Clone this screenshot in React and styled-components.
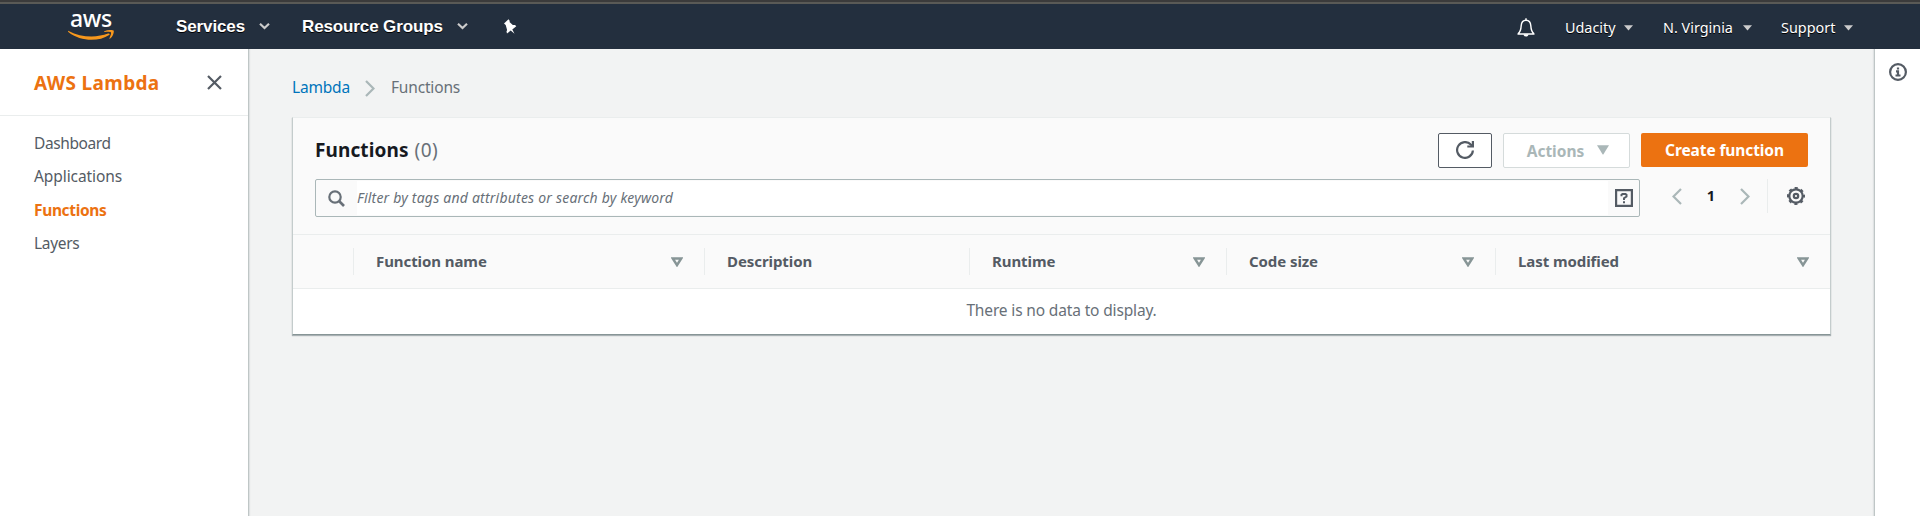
import React from "react";
import styled, { createGlobalStyle } from "styled-components";

const Global = createGlobalStyle`
  * { box-sizing: border-box; }
  body { margin: 0; background: #f2f3f3; font-family: "Noto Sans", "Open Sans", sans-serif; overflow: hidden; }
`;

const Page = styled.div`
  height: 516px;
  display: flex;
  flex-direction: column;
`;

const TopBar = styled.header`
  flex: none;
  height: 49px;
  padding-top: 4px;
  background: linear-gradient(#3b3b3b 2px, #5a5a56 2px, #5a5a56 4px, #232f3e 4px);
  display: flex;
  align-items: stretch;
`;

const Logo = styled.div`
  width: 47px;
  margin-left: 68px;
  padding-top: 3px;
  display: flex;
  flex-direction: column;
  align-items: flex-start;
  color: #fff;
`;
const LogoWord = styled.span`
  font-size: 23px;
  line-height: 22px;
  height: 23px;
  margin-left: 2px;
  font-weight: 500;
  letter-spacing: -0.3px;
`;

const MenuItem = styled.div`
  display: flex;
  align-items: center;
  white-space: nowrap;
  margin-left: ${(p) => p.$left}px;
  padding-top: ${(p) => p.$top || 0}px;
  height: 45px;
  gap: ${(p) => p.$gap}px;
  color: #fff;
  font-family: "Liberation Sans", Arial, sans-serif;
  font-size: 17px;
  font-weight: 700;
  text-shadow: 0 1px 0 #000;
`;
const AccountItem = styled(MenuItem)`
  font-family: "Noto Sans", sans-serif;
  font-size: 14.4px;
  font-weight: 400;
`;
const Spacer = styled.div`
  flex: 1;
`;
const Label = styled.span`
  display: inline-block;
  width: ${(p) => (p.$w ? p.$w + "px" : "auto")};
  letter-spacing: ${(p) => p.$ls || 0}px;
  white-space: nowrap;
`;

const Body = styled.div`
  flex: 1;
  display: flex;
  min-height: 0;
`;
const Sidebar = styled.nav`
  width: 249px;
  flex: none;
  background: #fff;
  border-right: 1px solid #bfc6c6;
  box-shadow: 1px 0 1px rgba(0, 28, 36, 0.08);
`;
const SideHeader = styled.div`
  height: 67px;
  border-bottom: 1px solid #eaeded;
  display: flex;
  align-items: center;
  justify-content: space-between;
  padding: 1px 26px 0 34px;
  color: #ec7211;
  font-size: 19px;
  font-weight: 700;
`;
const SideList = styled.div`
  padding: 11px 0 0 34px;
  display: flex;
  flex-direction: column;
`;
const SideLink = styled.a`
  height: 33.3px;
  line-height: 33px;
  font-size: 15.5px;
  font-weight: ${(p) => (p.$active ? 700 : 400)};
  color: ${(p) => (p.$active ? "#ec7211" : "#545b64")};
`;

const Main = styled.main`
  flex: 1;
  padding: 20px 43px 0 43px;
`;
const Crumbs = styled.div`
  height: 36px;
  display: flex;
  align-items: center;
  font-size: 15.5px;
  color: #687078;
`;
const Link = styled.a`
  color: #0073bb;
`;
const CrumbArrow = styled.span`
  display: flex;
  margin: 2px 16px 0 15px;
`;

const Panel = styled.section`
  margin-top: 12px;
  height: 218px;
  background: #fff;
  border: 1px solid #c4cccc;
  border-top-color: #eaeded;
  border-bottom: 1px solid #879596;
  box-shadow: 0 1px 1px rgba(0, 28, 36, 0.3);
`;
const PanelHead = styled.div`
  height: 117px;
  background: #fafafa;
  border-bottom: 1px solid #eaeded;
  padding: 15px 22px 0 22px;
`;
const TitleRow = styled.div`
  display: flex;
  height: 35px;
  align-items: center;
`;
const Title = styled.h2`
  margin: 0;
  font-size: 19px;
  line-height: 34px;
  padding-bottom: 1px;
  font-weight: 700;
  color: #16191f;
  display: flex;
  gap: 6px;
`;
const Count = styled.span`
  font-weight: 400;
  color: #687078;
  letter-spacing: 0.4px;
`;
const Button = styled.button`
  font: inherit;
  font-size: 15.5px;
  font-weight: 700;
  line-height: 30px;
  padding: 0 0 ${(p) => (p.$primary ? 1 : 0)}px ${(p) => p.$shift || 0}px;
  height: ${(p) => (p.$primary ? 34 : 35)}px;
  align-self: flex-start;
  width: ${(p) => p.$w}px;
  margin-left: 11px;
  border-radius: 2px;
  display: flex;
  align-items: center;
  justify-content: center;
  gap: 13px;
  background: ${(p) => (p.$primary ? "#ec7211" : "#fff")};
  color: ${(p) => (p.$primary ? "#fff" : "#aab7b8")};
  border: ${(p) => (p.$primary ? "0" : "1px solid " + (p.$line || "#d5dbdb"))};

  & > svg {
    margin-bottom: 1px;
  }
`;
const FilterRow = styled.div`
  display: flex;
  align-items: center;
  margin-top: 11px;
  height: 38px;
`;
const Search = styled.div`
  width: 1325px;
  height: 38px;
  border: 1px solid #aab7b8;
  border-radius: 2px;
  display: flex;
  align-items: stretch;
  padding: 1px 0;
`;
const SearchEdge = styled.span`
  width: ${(p) => p.$w}px;
  display: flex;
  align-items: center;
  justify-content: center;
`;
const SearchField = styled.span`
  flex: 1;
  background: #fff;
  color: #687078;
  font-style: italic;
  font-size: 14px;
  line-height: 34px;
`;
const Pager = styled.div`
  flex: 1;
  height: 34px;
  margin-top: -4px;
  display: flex;
  align-items: center;
  padding-left: 32px;
`;
const PageNumber = styled.span`
  width: 58px;
  text-align: center;
  font-size: 14.5px;
  line-height: 20px;
  padding-bottom: 2px;
  font-weight: 700;
  color: #16191f;
`;
const Divider = styled.span`
  width: 1px;
  height: 34px;
  background: #eaeded;
  margin: 0 19px 0 17px;
`;

const HeadRow = styled.div`
  display: grid;
  grid-template-columns: 60px 351px 265px 257px 269px 1fr;
  height: 54px;
  align-items: center;
  background: #fafafa;
  border-bottom: 1px solid #eaeded;
`;
const HeadCell = styled.div`
  height: 27px;
  border-left: ${(p) => (p.$first ? "0" : "1px solid #eaeded")};
  padding: 0 21px 0 22px;
  display: flex;
  align-items: center;
  justify-content: space-between;
  font-size: 15px;
  line-height: 24px;
  font-weight: 700;
  color: #545b64;

  & > span {
    padding-bottom: 2px;
  }
`;
const Empty = styled.div`
  height: 43px;
  line-height: 42px;
  text-align: center;
  font-size: 15.5px;
  color: #687078;
`;
const HelpRail = styled.aside`
  width: 46px;
  flex: none;
  border-left: 1px solid #bfc6c6;
  box-shadow: -1px 0 1px rgba(0, 28, 36, 0.08);
  background: #fff;
  display: flex;
  justify-content: center;
  padding-top: 14px;
`;

const Smile = () => (
  <svg width="47" height="12" viewBox="0 0 44 12" preserveAspectRatio="none" fill="#f7981d">
    <path d="M.6.9C12 7.600 27 7.800 37.500 3.600c1.200-.5 2 .5 1 1.300C29 11.800 12 12 .3 2-.2 1.500.1.700.6.900z" />
    <path d="M34 1.200C37.500-.4 42-.2 42.700.5c.6.8-.2 5.500-3.200 8-.5.4-.9.100-.7-.3.7-1.800 2-5 1.400-5.800-.7-.9-4-.6-5.800-.4-.6.100-.800-.4-.4-.8z" />
  </svg>
);
const Chevron = () => (
  <svg width="11" height="7" viewBox="0 0 11 7">
    <path d="M1 .8l4.500 4.200L10 .8" fill="none" stroke="#ccc" strokeWidth="2.200" />
  </svg>
);
const Caret = () => (
  <svg width="9" height="6" viewBox="0 0 9 6">
    <path d="M0 .3h9L4.500 5.500z" fill="#ccc" />
  </svg>
);
const Pin = () => (
  <svg width="14" height="16" viewBox="0 0 14 16" fill="#fff">
    <path d="M1 4.500L5.500.3l1.300 1.600-.3 1.200 3.300 3 2.200-.2 1.300 1.400-4 3.200 2.200 4.300-3.800-3.200-3.700 3-.5-2.200.6-1.500L2.700 5.900z" />
  </svg>
);
const Bell = () => (
  <svg width="18" height="19" viewBox="0 0 18 19" fill="none" stroke="#fff" strokeWidth="1.400">
    <path d="M.5 16h17M1.200 15.600c2.500-2 2.800-4.500 3-8C4.400 4.300 6 2.200 9 2.200s4.600 2.100 4.800 5.400c.2 3.500.5 6 3 8" />
    <path d="M9 .3v2" />
    <path d="M6.500 16.200h5c-.2 1.500-1.100 2.400-2.500 2.400s-2.300-.9-2.500-2.400z" fill="#fff" stroke="none" />
  </svg>
);
const Close = () => (
  <svg width="15" height="15" viewBox="0 0 15 15">
    <path d="M1 1l13 13M14 1L1 14" stroke="#545b64" strokeWidth="2.200" />
  </svg>
);
const Arrow = ({ left }) => (
  <svg width="10" height="17" viewBox="0 0 10 17">
    <path d={left ? "M9 1L1.500 8.500 9 16" : "M1 1l7.500 7.500L1 16"} fill="none" stroke="#aab7b8" strokeWidth="2.200" />
  </svg>
);
const Refresh = () => (
  <svg width="18" height="18" viewBox="0 0 18 18" fill="none" stroke="#545b64" strokeWidth="2.200">
    <path d="M16.900 9.500A7.900 7.900 0 1 1 14.800 3.600L16.300 5.100" />
    <path d="M16.900 0v5.500h-5.600" />
  </svg>
);
const Down = () => (
  <svg width="12" height="10" viewBox="0 0 12 10">
    <path d="M0 .3h12L6.300 9.500h-.6z" fill="#aab7b8" />
  </svg>
);
const Magnifier = () => (
  <svg width="17" height="17" viewBox="0 0 17 17" fill="none" stroke="#687078">
    <circle cx="7" cy="7" r="5.700" strokeWidth="2.200" />
    <path d="M11 11l5 5" strokeWidth="2.600" />
  </svg>
);
const Help = () => (
  <svg width="18" height="18" viewBox="0 0 18 18" fill="none" stroke="#545b64" strokeWidth="2">
    <path d="M1 1h16v16H1z" strokeWidth="2.400" />
    <path d="M6.500 7.300V5.700L7.500 4.900h3l1 .8v1.800L9 9.300v1.700M9 12.200v2" />
  </svg>
);
const Gear = () => (
  <svg width="18" height="18" viewBox="0 0 18 18" fill="none" stroke="#545b64">
    <circle cx="9" cy="9" r="6.700" strokeWidth="2.200" />
    <circle cx="9" cy="9" r="8" strokeWidth="2" strokeDasharray="3.140 3.140" strokeDashoffset="1.570" />
    <circle cx="9" cy="9" r="2.200" strokeWidth="2.200" />
  </svg>
);
const Sort = () => (
  <svg width="12" height="10" viewBox="0 0 12 10">
    <path d="M1.800 1.500h8.400L6 8.100z" fill="none" stroke="#879596" strokeWidth="2.500" />
  </svg>
);
const Info = () => (
  <svg width="18" height="18" viewBox="0 0 18 18" fill="none" stroke="#545b64" strokeWidth="2.200">
    <circle cx="9" cy="9" r="7.900" />
    <path d="M9 4.500v2M7 8.300h2v4M6.500 12.500h5" />
  </svg>
);

const NAV = [
  ["Dashboard", -0.4],
  ["Applications", -0.08],
  ["Functions", -0.35],
  ["Layers", -0.3],
];
const COLUMNS = [
  { name: "Function name", sort: true },
  { name: "Description" },
  { name: "Runtime", sort: true },
  { name: "Code size", sort: true },
  { name: "Last modified", sort: true },
];

export default function App() {
  return (
    <Page>
      <Global />
      <TopBar>
        <Logo>
          <LogoWord>aws</LogoWord>
          <Smile />
        </Logo>
        <MenuItem $left={61} $gap={14}><Label $ls={-0.12}>Services</Label><Chevron /></MenuItem>
        <MenuItem $left={32} $gap={14}><Label $ls={-0.12}>Resource Groups</Label><Chevron /></MenuItem>
        <MenuItem $left={35} $gap={0}><Pin /></MenuItem>
        <Spacer />
        <MenuItem $left={0} $gap={0} $top={1}><Bell /></MenuItem>
        <AccountItem $left={30} $gap={9} $top={2}><Label $w={50}>Udacity</Label><Caret /></AccountItem>
        <AccountItem $left={30} $gap={9} $top={2}><Label $w={71}>N. Virginia</Label><Caret /></AccountItem>
        <AccountItem $left={29} $gap={9} $top={2}><Label $w={54}>Support</Label><Caret /></AccountItem>
        <MenuItem $left={67} />
      </TopBar>
      <Body>
        <Sidebar>
          <SideHeader><Label $ls={0.35}>AWS Lambda</Label><Close /></SideHeader>
          <SideList>
            {NAV.map(([name, ls]) => (
              <SideLink key={name} $active={name === "Functions"}><Label $ls={ls}>{name}</Label></SideLink>
            ))}
          </SideList>
        </Sidebar>
        <Main>
          <Crumbs>
            <Link><Label $ls={-0.2}>Lambda</Label></Link>
            <CrumbArrow><Arrow /></CrumbArrow>
            <Label $ls={-0.15}>Functions</Label>
          </Crumbs>
          <Panel>
            <PanelHead>
              <TitleRow>
                <Title><Label $ls={0.1}>Functions</Label><Count>(0)</Count></Title>
                <Spacer />
                <Button $w={54} $line="#545b64"><Refresh /></Button>
                <Button $w={127} $shift={3}><Label>Actions</Label><Down /></Button>
                <Button $w={167} $primary><Label $ls={-0.1}>Create function</Label></Button>
              </TitleRow>
              <FilterRow>
                <Search>
                  <SearchEdge $w={41}><Magnifier /></SearchEdge>
                  <SearchField><Label $ls={0.21}>Filter by tags and attributes or search by keyword</Label></SearchField>
                  <SearchEdge $w={31}><Help /></SearchEdge>
                </Search>
                <Pager>
                  <Arrow left />
                  <PageNumber>1</PageNumber>
                  <Arrow />
                  <Divider />
                  <Gear />
                </Pager>
              </FilterRow>
            </PanelHead>
            <HeadRow>
              <HeadCell $first />
              {COLUMNS.map((c) => (
                <HeadCell key={c.name}><Label $ls={-0.08}>{c.name}</Label>{c.sort && <Sort />}</HeadCell>
              ))}
            </HeadRow>
            <Empty><Label $ls={-0.15}>There is no data to display.</Label></Empty>
          </Panel>
        </Main>
        <HelpRail><Info /></HelpRail>
      </Body>
    </Page>
  );
}
